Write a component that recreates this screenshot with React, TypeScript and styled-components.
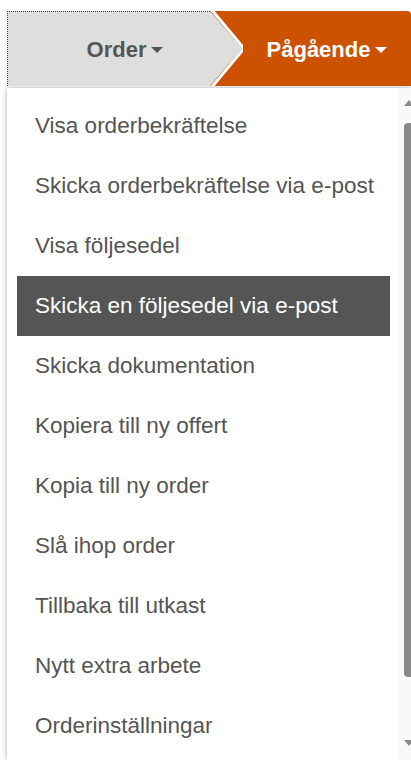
import React from "react";
import styled, { createGlobalStyle } from "styled-components";

const GlobalStyle = createGlobalStyle`
    html, body {
        margin: 0;
        padding: 0;
        background: #ffffff;
        overflow: hidden;
    }
    body {
        font-family: "Liberation Sans", Arial, sans-serif;
    }
`

const Page = styled.div`
    padding: 11px 0 0 7px;
    height: 100vh;
    box-sizing: border-box;
    display: flex;
    flex-direction: column;
`

const Steps = styled.div`
    display: flex;
    height: 75px;
    background: #cc5200;
    border-top-right-radius: 4px;
    position: relative;
    z-index: 2;
`

const Step = styled.div<{ active?: boolean }>`
    position: relative;
    display: flex;
    align-items: center;
    justify-content: center;
    width: ${props => props.active ? "auto" : "236px"};
    flex: ${props => props.active ? 1 : "none"};
    font-size: 22px;
    font-weight: bold;
    color: ${props => props.active ? "#ffffff" : "#555555"};
    padding-top: 2px;
`

const StepShape = styled.svg`
    position: absolute;
    inset: 0;
    width: 100%;
    height: 100%;
`

const StepLabel = styled.span`
    position: relative;
    display: flex;
    align-items: center;
    gap: 5px;
`

const Caret = styled.span<{ light?: boolean }>`
    width: 0;
    height: 0;
    border-left: 6px solid transparent;
    border-right: 6px solid transparent;
    border-top: 6px solid ${props => props.light ? "#ffffff" : "#555555"};
    margin-top: 1px;
`

const Panel = styled.div`
    flex: 1;
    margin-top: 2px;
    display: flex;
    background: #ffffff;
    box-shadow: 0 0 5px rgba(0, 0, 0, 0.35);
    min-height: 0;
    overflow: hidden;
`

const List = styled.ul`
    flex: 1;
    list-style: none;
    margin: 0;
    padding: 8px 8px 0 10px;
`

const Item = styled.li<{ selected?: boolean }>`
    height: 60px;
    display: flex;
    align-items: center;
    padding-left: 18px;
    font-size: 22.5px;
    color: ${props => props.selected ? "#ffffff" : "#555555"};
    background: ${props => props.selected ? "#555555" : "transparent"};
    white-space: nowrap;
`

const Scrollbar = styled.div`
    width: 13px;
    background: #f9f9f9;
    display: flex;
    flex-direction: column;
    align-items: flex-end;
    padding: 12px 0 14px;
    gap: 17px;
`

const Arrow = styled.span<{ down?: boolean }>`
    width: 0;
    height: 0;
    margin-right: -3px;
    border-left: 5px solid transparent;
    border-right: 5px solid transparent;
    ${props => props.down
        ? "border-top: 6px solid #8a8a8a;"
        : "border-bottom: 6px solid #8a8a8a;"}
`

const Thumb = styled.div`
    width: 7px;
    flex: 1;
    margin-bottom: 46px;
    background: #8a8a8a;
    border-radius: 4px 0 0 4px;
`

const items = [
    "Visa orderbekräftelse",
    "Skicka orderbekräftelse via e-post",
    "Visa följesedel",
    "Skicka en följesedel via e-post",
    "Skicka dokumentation",
    "Kopiera till ny offert",
    "Kopia till ny order",
    "Slå ihop order",
    "Tillbaka till utkast",
    "Nytt extra arbete",
    "Orderinställningar",
]

export default function App() {
    return (
        <Page>
            <GlobalStyle />
            <Steps>
                <Step>
                    <StepShape viewBox="0 0 236 75" preserveAspectRatio="none">
                        <path d="M0 0 H203 L235 37.5 L203 75 H0 Z" fill="#dedede" />
                        <polyline points="204,-2 237,37.5 204,77" fill="none" stroke="#ffffff" strokeWidth="3" />
                        <line x1="0" y1="0.5" x2="203" y2="0.5" stroke="#444" strokeWidth="1" strokeDasharray="1 1" />
                        <line x1="0.5" y1="0" x2="0.5" y2="75" stroke="#444" strokeWidth="1" strokeDasharray="1 1" />
                    </StepShape>
                    <StepLabel>Order<Caret /></StepLabel>
                </Step>
                <Step active>
                    <StepLabel>Pågående<Caret light /></StepLabel>
                </Step>
            </Steps>
            <Panel>
                <List>
                    {items.map(text => (
                        <Item key={text} selected={text === "Skicka en följesedel via e-post"}>{text}</Item>
                    ))}
                </List>
                <Scrollbar>
                    <Arrow />
                    <Thumb />
                    <Arrow down />
                </Scrollbar>
            </Panel>
        </Page>
    )
}
